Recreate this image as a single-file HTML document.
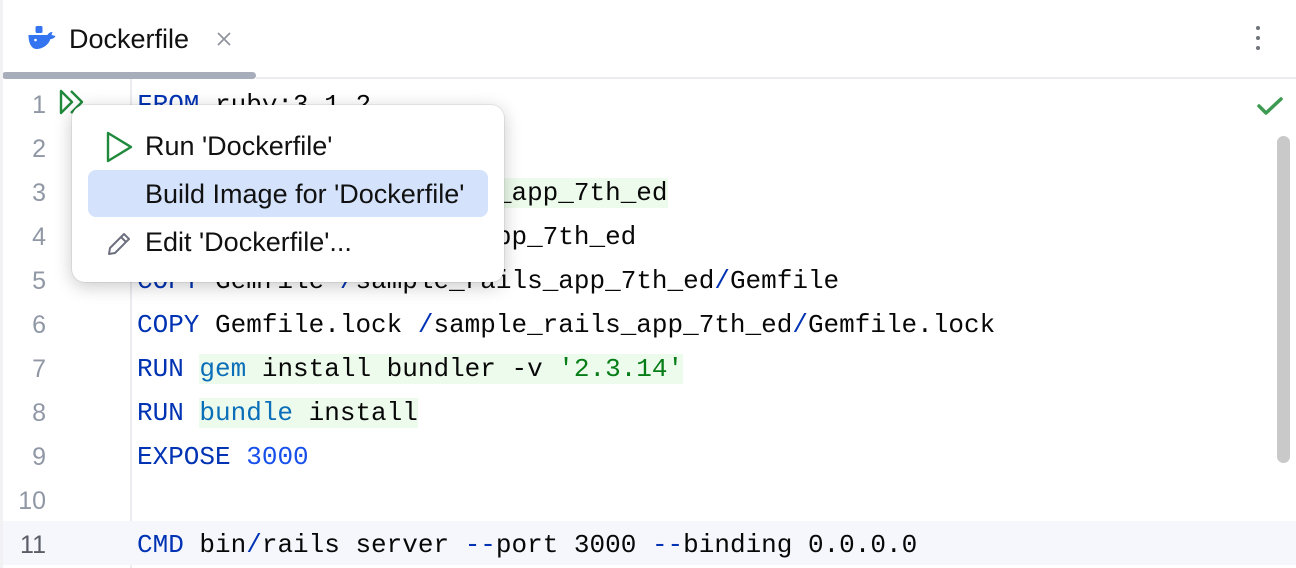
<!DOCTYPE html>
<html><head><style>
body{margin:0;width:1296px;height:568px;background:#fff;overflow:hidden;position:relative;font-family:"Liberation Sans",sans-serif}
.tab{position:absolute;left:69px;top:24px;font-size:27px;color:#111}
.code{position:absolute;left:137px;font-family:"Liberation Mono",monospace;font-size:26px;color:#080808;white-space:pre;line-height:44px;height:44px}
.ln{position:absolute;width:46px;text-align:right;left:0;font-family:"Liberation Sans",sans-serif;font-size:25px;color:#9097a5;line-height:44px}
.k{color:#0033b3}.f{color:#0a6fb8}.s{color:#067d17}.n{color:#1750eb}
.g{background:#edfbec}
.pop{position:absolute;left:72px;top:105px;width:432px;height:177px;background:#fff;border-radius:13px;box-shadow:0 4px 18px rgba(0,0,0,.22),0 0 0 1px rgba(0,0,0,.06)}
.it{position:absolute;left:73px;font-size:27px;color:#111}
</style></head><body>
<svg style="position:absolute;left:27px;top:25px" width="31" height="26" viewBox="0 0 30 26"><rect x="8" y="1" width="7" height="7" rx="1.5" fill="#3574f0"/><path d="M1 10h19c1-2 3-3 5-3l-1 3 4 1c-1 2-3 3-5 3-2 6-8 10-14 10C4 24 1 18 1 10z" fill="#3574f0"/><circle cx="8" cy="15" r="1.3" fill="#fff"/></svg>
<div class="tab">Dockerfile</div>
<svg style="position:absolute;left:216px;top:31px" width="16" height="16" viewBox="0 0 16 16"><path d="M2 2l12 12M14 2L2 14" stroke="#8c909a" stroke-width="1.6"/></svg>
<div style="position:absolute;left:2px;top:72px;width:254px;height:7px;background:#a8adbb;border-radius:4px"></div>
<div style="position:absolute;left:256px;top:77px;width:1040px;height:2px;background:#ebecf0"></div>
<div style="position:absolute;left:1256px;top:26px;width:4px;height:4px;border-radius:2px;background:#6f737a;box-shadow:0 10px 0 #6f737a,0 20px 0 #6f737a"></div>
<svg style="position:absolute;left:1256px;top:96px" width="28" height="20" viewBox="0 0 28 20"><path d="M3 10l7 7L25 3" fill="none" stroke="#3d9a50" stroke-width="3.5" stroke-linecap="round" stroke-linejoin="round"/></svg>
<div style="position:absolute;left:1277px;top:136px;width:13px;height:327px;background:#c9c9c9;border-radius:7px"></div>
<div style="position:absolute;left:130px;top:79px;width:2px;height:489px;background:#ebecf0"></div>
<div style="position:absolute;left:0;top:521px;width:1296px;height:44px;background:#f5f7fd"></div>
<div style="position:absolute;left:0;top:0;width:3px;height:568px;background:#f2f2f4"></div>
<svg style="position:absolute;left:59px;top:89px" width="28" height="26" viewBox="0 0 28 26"><path d="M2 2l11 11L2 24z M12 2l11 11-11 11" fill="none" stroke="#208a3c" stroke-width="2.4" stroke-linejoin="round"/></svg>

<div class="ln" style="top:83px">1</div><div class="ln" style="top:127px">2</div><div class="ln" style="top:171px">3</div><div class="ln" style="top:215px">4</div><div class="ln" style="top:259px">5</div><div class="ln" style="top:303px">6</div><div class="ln" style="top:347px">7</div><div class="ln" style="top:391px">8</div><div class="ln" style="top:435px">9</div><div class="ln" style="top:479px">10</div><div class="ln" style="top:523px;color:#5a5d66">11</div>

<div class="code" style="top:83px"><span class="k">FROM</span> ruby:3.1.2</div>
<div class="code" style="top:171px"><span class="k">RUN</span> <span class="g"><span class="f">mkdir</span> /sample_rails_app_7th_ed</span></div>
<div class="code" style="top:215px"><span class="k">WORKDIR</span> /sample_rails_app_7th_ed</div>
<div class="code" style="top:259px"><span class="k">COPY</span> Gemfile <span class="k">/</span>sample_rails_app_7th_ed<span class="k">/</span>Gemfile</div>
<div class="code" style="top:303px"><span class="k">COPY</span> Gemfile.lock <span class="k">/</span>sample_rails_app_7th_ed<span class="k">/</span>Gemfile.lock</div>
<div class="code" style="top:347px"><span class="k">RUN</span> <span class="g"><span class="f">gem</span> install bundler -v <span class="s">'2.3.14'</span></span></div>
<div class="code" style="top:391px"><span class="k">RUN</span> <span class="g"><span class="f">bundle</span> install</span></div>
<div class="code" style="top:435px"><span class="k">EXPOSE</span> <span class="n">3000</span></div>
<div class="code" style="top:523px"><span class="k">CMD</span> bin<span class="k">/</span>rails server <span class="k">--</span>port 3000 <span class="k">--</span>binding 0.0.0.0</div>

<div class="pop">
<svg style="position:absolute;left:33px;top:26px" width="30" height="32" viewBox="0 0 30 32"><path d="M3 2l23 14L3 30z" fill="none" stroke="#208a3c" stroke-width="2.4" stroke-linejoin="round"/></svg>
<div class="it" style="top:26px">Run 'Dockerfile'</div>
<div style="position:absolute;left:16px;top:65px;width:400px;height:47px;background:#d4e2fb;border-radius:8px"></div>
<div class="it" style="top:74px">Build Image for 'Dockerfile'</div>
<svg style="position:absolute;left:34px;top:124px" width="28" height="28" viewBox="0 0 28 28"><path d="M3 25l1-6L18 5l5 5L9 24z M15 8l5 5" fill="none" stroke="#6c707e" stroke-width="2" stroke-linejoin="round"/></svg>
<div class="it" style="top:122px">Edit 'Dockerfile'...</div>
</div>
</body></html>
